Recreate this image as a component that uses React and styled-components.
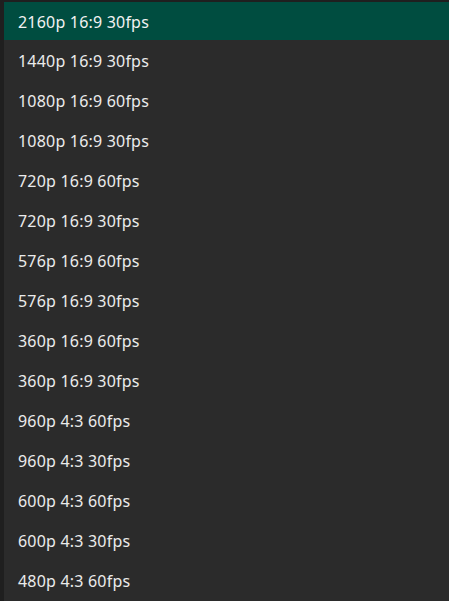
import React from "react";
import styled, { createGlobalStyle } from "styled-components";

const Global = createGlobalStyle`
  html, body { margin: 0; padding: 0; background: #1f1f1f; }
  body { overflow: hidden; }
`;

const Frame = styled.div`
  height: 601px;
  border-left: 4px solid #1f1f1f;
  background: #2b2b2b;
  box-sizing: border-box;
  overflow: hidden;
`;

const List = styled.ul`
  list-style: none;
  margin: 0;
  padding: 0;
  display: flex;
  flex-direction: column;
`;

const Item = styled.li`
  height: 40px;
  flex: none;
  display: flex;
  align-items: center;
  padding: ${(p) => (p.$selected ? "3px 0 0 14px" : "1px 0 0 14px")};
  box-sizing: border-box;
  font-family: "Noto Sans", "Open Sans", sans-serif;
  font-size: 16px;
  letter-spacing: 0.2px;
  color: ${(p) => (p.$selected ? "#f2f2f2" : "#ebebeb")};
  background: ${(p) => (p.$selected ? "#004d40" : "transparent")};
  box-shadow: ${(p) => (p.$selected ? "inset 0 2px 0 #1f1f1f" : "none")};
`;

const options = [
  "2160p 16:9 30fps",
  "1440p 16:9 30fps",
  "1080p 16:9 60fps",
  "1080p 16:9 30fps",
  "720p 16:9 60fps",
  "720p 16:9 30fps",
  "576p 16:9 60fps",
  "576p 16:9 30fps",
  "360p 16:9 60fps",
  "360p 16:9 30fps",
  "960p 4:3 60fps",
  "960p 4:3 30fps",
  "600p 4:3 60fps",
  "600p 4:3 30fps",
  "480p 4:3 60fps",
];

export default function App() {
  return (
    <>
      <Global />
      <Frame>
        <List>
          {options.map((o, i) => (
            <Item key={o} $selected={i === 0}>
              {o}
            </Item>
          ))}
        </List>
      </Frame>
    </>
  );
}
